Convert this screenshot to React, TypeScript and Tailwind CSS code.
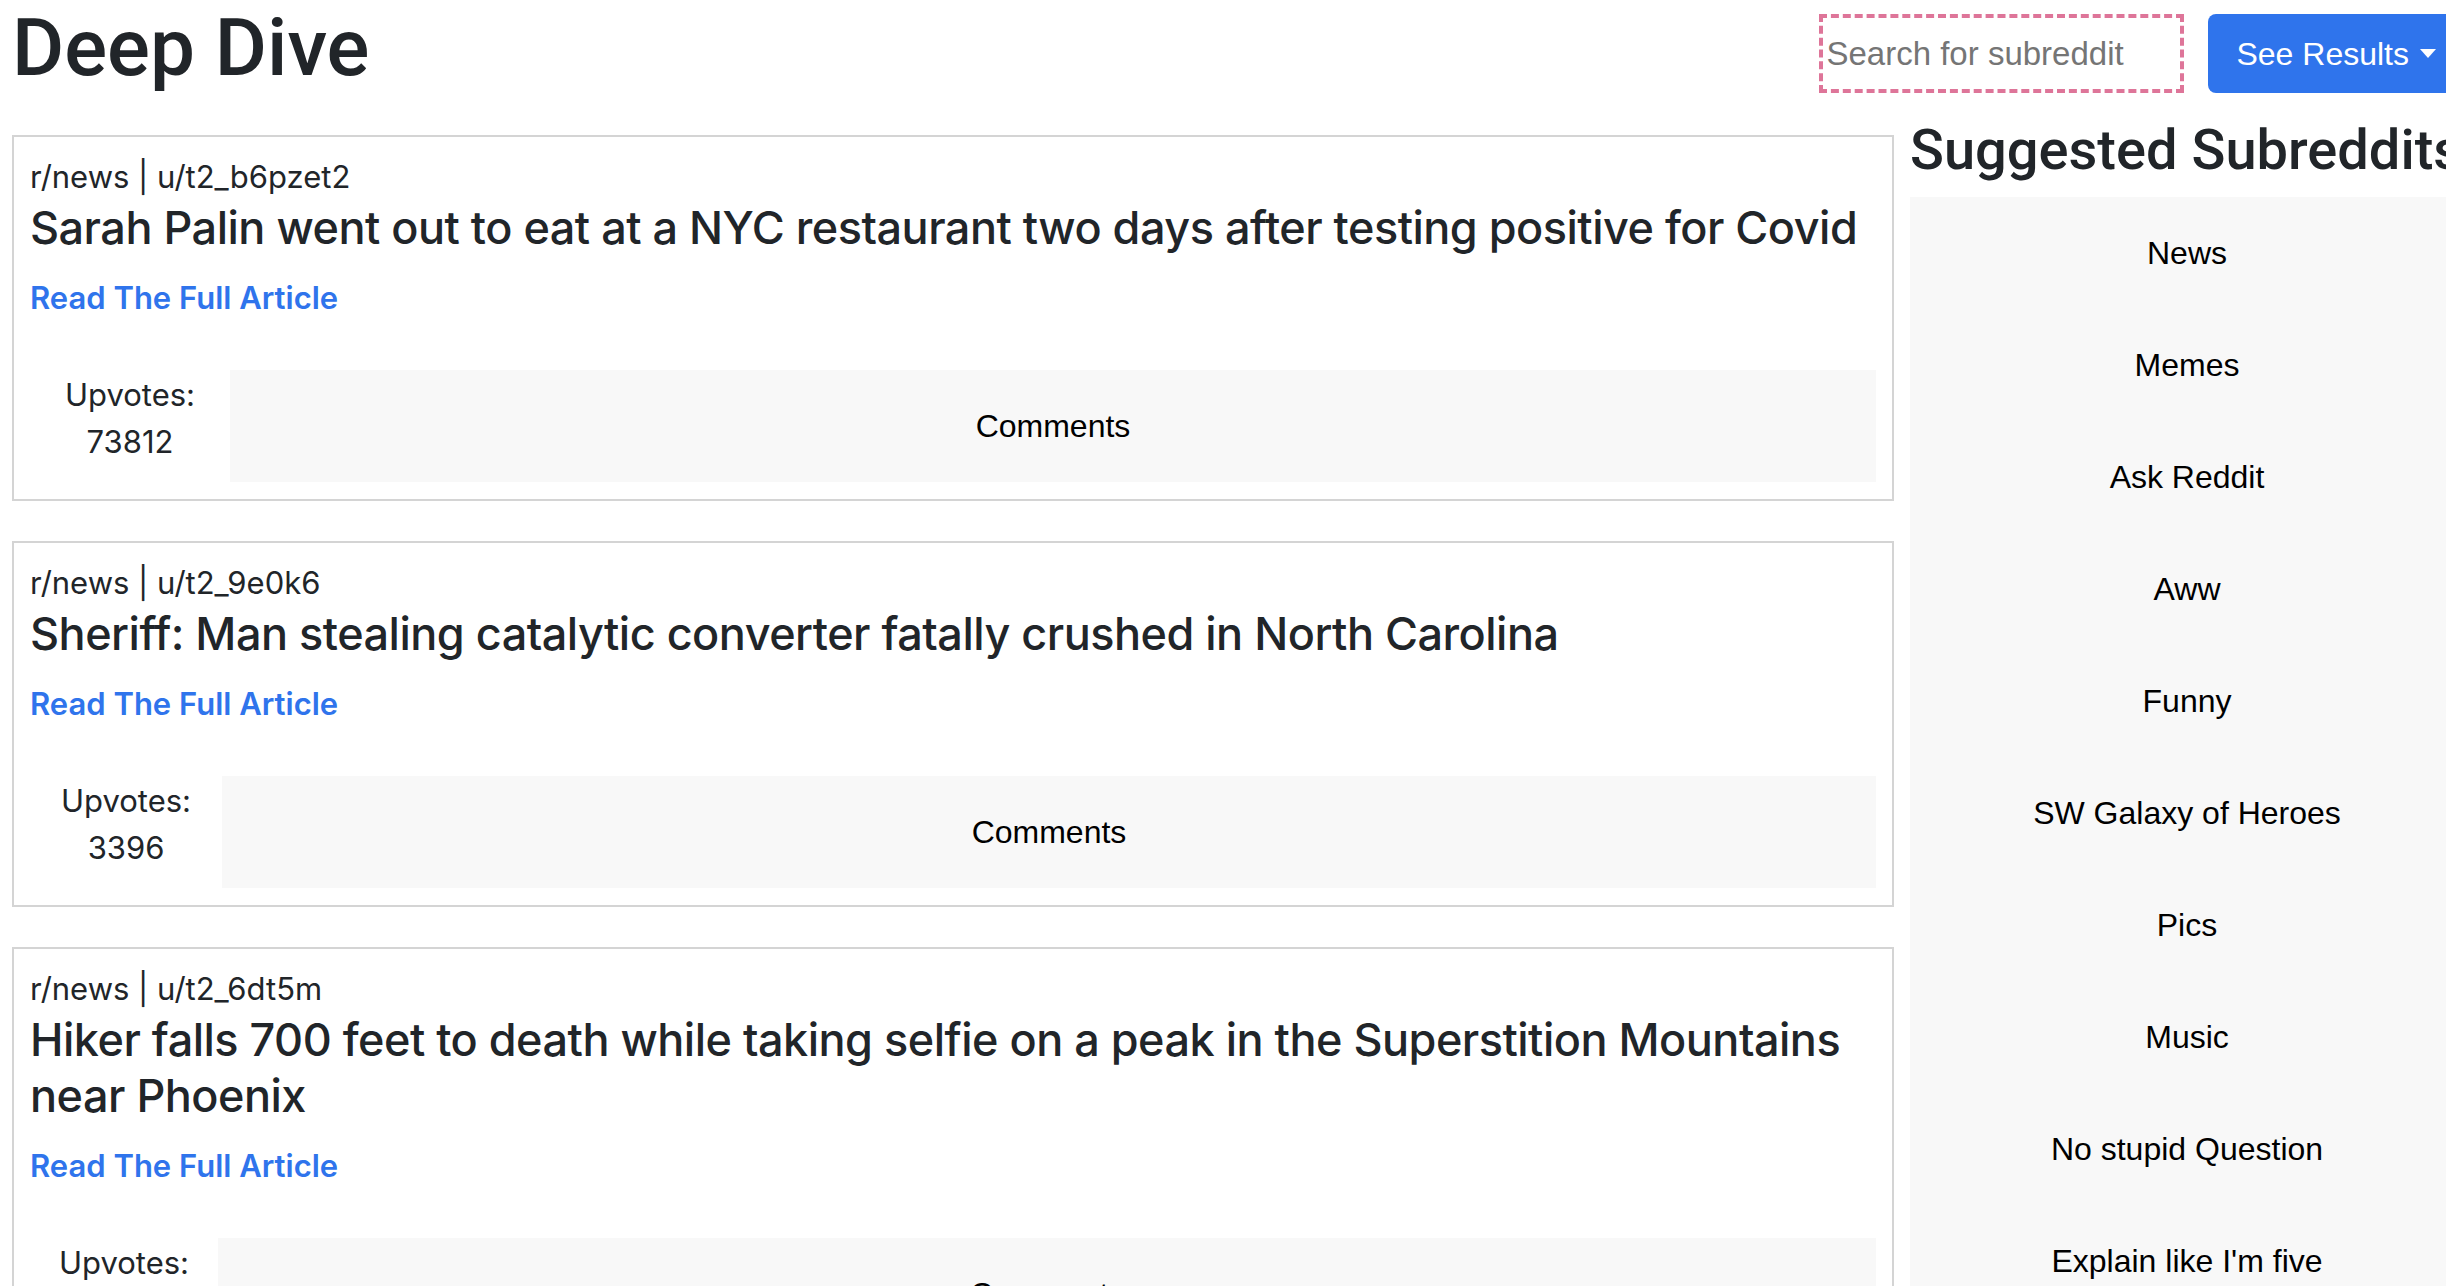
import React from "react";

// Sidebar list of suggested subreddits
const suggested = [
  "News",
  "Memes",
  "Ask Reddit",
  "Aww",
  "Funny",
  "SW Galaxy of Heroes",
  "Pics",
  "Music",
  "No stupid Question",
  "Explain like I'm five",
];

// Posts shown in the feed (colWidth matches the upvote column of each card)
const posts = [
  {
    sub: "r/news",
    user: "u/t2_b6pzet2",
    title:
      "Sarah Palin went out to eat at a NYC restaurant two days after testing positive for Covid",
    upvotes: 73812,
    colWidth: "w-[200px]",
  },
  {
    sub: "r/news",
    user: "u/t2_9e0k6",
    title: "Sheriff: Man stealing catalytic converter fatally crushed in North Carolina",
    upvotes: 3396,
    colWidth: "w-[192px]",
  },
  {
    sub: "r/news",
    user: "u/t2_6dt5m",
    title:
      "Hiker falls 700 feet to death while taking selfie on a peak in the Superstition Mountains near Phoenix",
    upvotes: 1846,
    colWidth: "w-[188px]",
  },
];

const helvetica = "font-['Liberation_Sans',Arial,sans-serif]";
const heading = "font-['Roboto','Liberation_Sans',Arial,sans-serif]";
const system = "font-['Inter','Liberation_Sans',sans-serif]";

type Post = (typeof posts)[number];

const PostCard = ({ post }: { post: Post }) => (
  <article className={`border-2 border-[#d4d4d4] bg-white px-[16px] pt-[16px] pb-[17px] text-[#212529] ${system}`}>
    <p className="text-[31px] leading-[47px]">
      {post.sub} | {post.user}
    </p>
    <h4 className="text-[45px] leading-[56px] font-medium tracking-[-0.5px]">{post.title}</h4>
    <a href="#" className="mt-[18px] block text-[31px] leading-[48px] font-semibold text-[#2f74ec]">
      Read The Full Article
    </a>
    <div className="mt-[48px] flex h-[112px]">
      <div className={`${post.colWidth} shrink-0 pt-[1px] text-center text-[31px] leading-[47px]`}>
        <div>Upvotes:</div>
        <div>{post.upvotes}</div>
      </div>
      <div className={`flex flex-1 items-center justify-center bg-[#f8f8f8] text-[32px] leading-[48px] text-black ${helvetica}`}>
        Comments
      </div>
    </div>
  </article>
);

export default function App() {
  return (
    <div className="h-screen w-screen overflow-hidden bg-white">
      <div className="w-[2476px] px-[12px]">
        <header className="flex items-start">
          <h1 className={`text-[80px] leading-[96px] font-medium text-[#212529] ${heading}`}>
            Deep Dive
          </h1>
          <div className="mt-[14px] ml-auto flex gap-[24px]">
            <input
              type="text"
              placeholder="Search for subreddit"
              className={`h-[79px] w-[365px] border-4 border-dashed border-[#de7599] pl-[3px] text-[33px] text-[#212529] outline-none placeholder:text-[#757575] ${helvetica}`}
            />
            <button
              type="button"
              className={`flex h-[79px] items-center rounded-[8px] bg-[#2f74ec] px-[28px] text-[32px] text-white ${helvetica}`}
            >
              See Results
              <span className="ml-[11px] h-0 w-0 border-x-[8px] border-t-[9px] border-x-transparent border-t-white" />
            </button>
          </div>
        </header>

        <div className="flex gap-[16px]">
          <main className="flex w-[1882px] shrink-0 flex-col gap-[40px] pt-[39px]">
            {posts.map((post) => (
              <PostCard key={post.user} post={post} />
            ))}
          </main>

          <aside className={`w-[554px] shrink-0 pt-[21px] ${helvetica}`}>
            <h3 className={`mb-[14px] text-[56px] leading-[66px] font-medium whitespace-nowrap text-[#212529] ${heading}`}>
              Suggested Subreddits
            </h3>
            <ul className="bg-[#f8f8f8]">
              {suggested.map((name) => (
                <li
                  key={name}
                  className="flex h-[112px] items-center justify-center text-[32px] leading-[48px] text-black"
                >
                  {name}
                </li>
              ))}
            </ul>
          </aside>
        </div>
      </div>
    </div>
  );
}
